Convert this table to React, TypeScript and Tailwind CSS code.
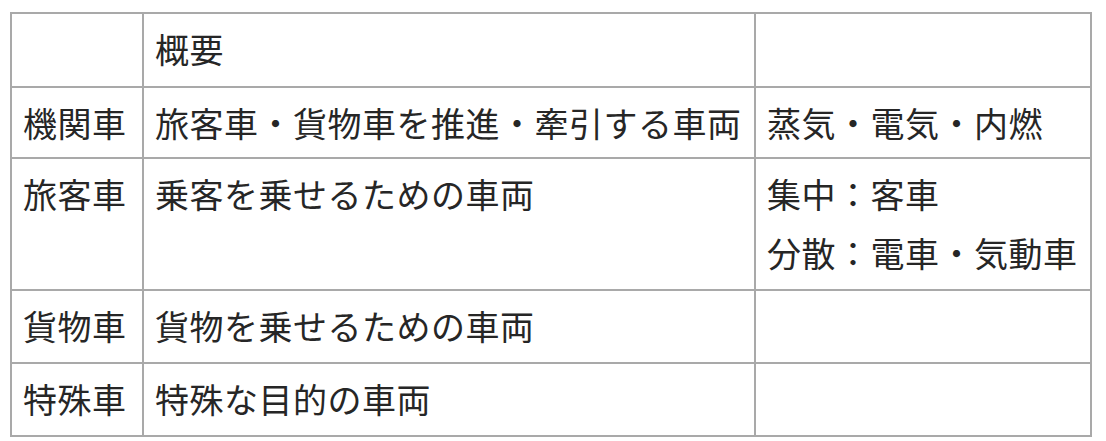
import React from "react";

const rows: [string, string, string[]][] = [
  ["", "概要", []],
  ["機関車", "旅客車・貨物車を推進・牽引する車両", ["蒸気・電気・内燃"]],
  ["旅客車", "乗客を乗せるための車両", ["集中：客車", "分散：電車・気動車"]],
  ["貨物車", "貨物を乗せるための車両", []],
  ["特殊車", "特殊な目的の車両", []],
];

export default function App() {
  return (
    <div
      className="w-[1106px] h-[441px] bg-white pl-[10px] pt-[12px] text-[#262626] text-[34px] tracking-[0.5px] leading-[59px]"
      style={{ fontFamily: '"Noto Sans CJK JP", "Noto Sans", sans-serif' }}
    >
      <div className="inline-grid grid-cols-[130px_610px_334px] grid-rows-[72px_69px_130px_71px_71px] gap-[2px] p-[2px] bg-[#a9a9a9]">
        {rows.map((r, i) => (
          <React.Fragment key={i}>
            <div className="bg-white pl-[11px] pt-[5px] whitespace-nowrap">{r[0]}</div>
            <div className="bg-white pl-[11px] pt-[5px] whitespace-nowrap">{r[1]}</div>
            <div className="bg-white pl-[11px] pt-[5px] whitespace-nowrap">
              {r[2].map((t, j) => (
                <div key={j}>{t}</div>
              ))}
            </div>
          </React.Fragment>
        ))}
      </div>
    </div>
  );
}
